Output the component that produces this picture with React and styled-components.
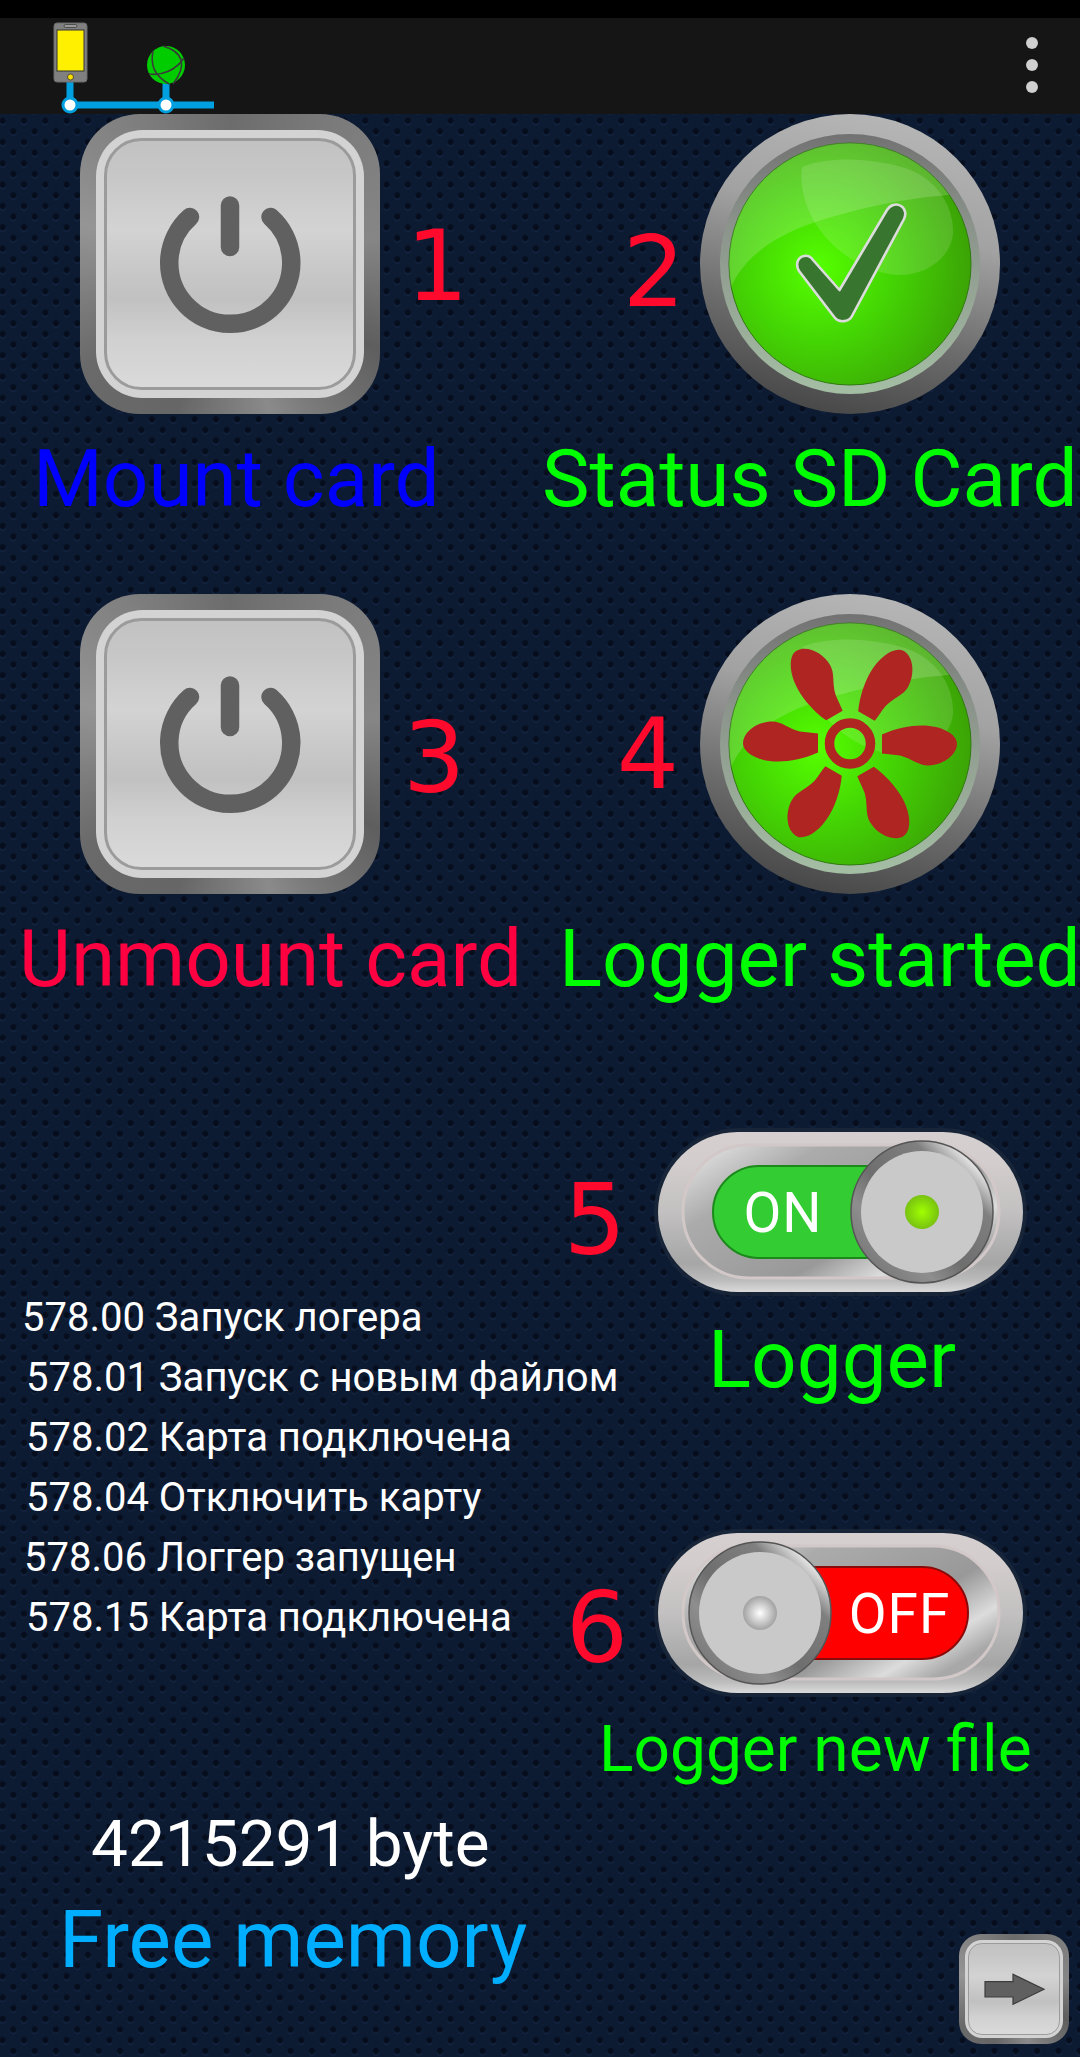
import React from "react";
import styled, { createGlobalStyle } from "styled-components";

const Global = createGlobalStyle`
  html, body { margin: 0; padding: 0; background: #0c1a32; }
  * { box-sizing: border-box; }
`;

const Page = styled.div`
  width: 1080px;
  height: 2057px;
  overflow: hidden;
  font-family: Roboto, "Liberation Sans", sans-serif;
  background-color: #0c1a32;
  background-image:
    radial-gradient(circle at center, #060e1d 0 2.6px, transparent 3.6px),
    radial-gradient(circle at center, #060e1d 0 2.6px, transparent 3.6px),
    radial-gradient(circle at center, #13233f 0 3px, transparent 4px),
    radial-gradient(circle at center, #13233f 0 3px, transparent 4px);
  background-size: 21.33px 21.33px;
  background-position: 2.67px -7.27px, 13.33px 3.4px, 2.67px -5.77px, 13.33px 4.9px;
`;

const StatusBar = styled.div`
  height: 18px;
  background: #000;
`;

const Header = styled.header`
  height: 96px;
  background: #151515;
  display: flex;
  justify-content: space-between;
  align-items: flex-start;
`;

const MenuDots = styled.div`
  margin: 19px 42px 0 0;
  display: flex;
  flex-direction: column;
  gap: 10px;
`;

const Dot = styled.span`
  width: 12px;
  height: 12px;
  border-radius: 50%;
  background: radial-gradient(circle, #d0d0d0 0 60%, #8a8a8a 100%);
`;

const Tiles = styled.section`
  display: grid;
  grid-template-columns: 540px 540px;
  grid-auto-rows: 480px;
`;

const Tile = styled.div`
  display: flex;
  flex-direction: column;
  min-width: 0;
`;

const ArtLine = styled.div`
  height: 300px;
  display: flex;
  align-items: center;
  justify-content: ${(p) => (p.$end ? "flex-end" : "flex-start")};
  padding: ${(p) => (p.$end ? "0 80px 0 0" : "0 0 0 80px")};
  gap: ${(p) => p.$gap}px;
`;

const Num = styled.span`
  font-family: "DejaVu Sans", "Noto Sans", sans-serif;
  font-size: 98px;
  line-height: 1;
  color: #ff0a2d;
  margin-top: ${(p) => p.$drop || 0}px;
`;

const Label = styled.div`
  font-size: ${(p) => p.$size || 80}px;
  line-height: 1;
  white-space: nowrap;
  color: ${(p) => p.$color};
  margin-top: ${(p) => p.$top || 0}px;
  margin-left: ${(p) => p.$left || 0}px;
`;

const Key = styled.div`
  flex: none;
  width: ${(p) => p.$size}px;
  height: ${(p) => p.$size}px;
  padding: ${(p) => p.$size * 0.053}px;
  border-radius: ${(p) => p.$size * 0.2}px;
  background: conic-gradient(#6c6c6c 0deg, #7c7c7c 40deg, #868686 80deg, #5e5e5e 120deg, #7a7a7a 150deg, #8a8a8a 165deg, #666 200deg, #6a6a6a 235deg, #959595 285deg, #7c7c7c 330deg, #6c6c6c 360deg);
`;

const KeyLip = styled.div`
  height: 100%;
  padding: ${(p) => p.$size * 0.028}px;
  border-radius: ${(p) => p.$size * 0.155}px;
  background: #d3d3d3;
`;

const KeyFace = styled.div`
  height: 100%;
  display: flex;
  align-items: center;
  justify-content: center;
  border: ${(p) => Math.max(1.5, p.$size * 0.011)}px solid #9b9b9b;
  border-radius: ${(p) => p.$size * 0.125}px;
  background: linear-gradient(180deg, #c2c2c2 0%, #c6c6c6 12%, #d3d3d3 36%, #c8c8c8 52%, #c1c1c1 64%, #d0d0d0 80%, #dadada 100%);
`;

const Lower = styled.section`
  display: grid;
  grid-template-columns: 540px 540px;
  margin-top: 58px;
`;

const LeftCol = styled.div`
  padding-top: 156px;
  min-width: 0;
`;

const LogList = styled.ul`
  list-style: none;
  margin: 0;
  padding: 0;
`;

const LogLine = styled.li`
  height: 60px;
  line-height: 60px;
  font-size: 40px;
  white-space: nowrap;
  color: #fff;
  padding-left: ${(p) => p.$indent}px;
`;

const Bytes = styled.div`
  font-size: 65.7px;
  line-height: 80px;
  color: #fff;
  margin: 156px 0 0 91px;
  white-space: nowrap;
`;

const FreeMem = styled.div`
  font-size: 80px;
  line-height: 100px;
  color: #00aeff;
  margin: 6px 0 0 59px;
  white-space: nowrap;
`;

const RightCol = styled.div`
  display: flex;
  flex-direction: column;
  min-width: 0;
`;

const SwitchLine = styled.div`
  height: 160px;
  display: flex;
  align-items: center;
  justify-content: flex-end;
  padding-right: 57px;
  gap: ${(p) => p.$gap}px;
  margin-top: ${(p) => p.$top || 0}px;
`;

const ArrowSlot = styled.div`
  display: flex;
  justify-content: flex-end;
  padding-right: 11px;
  margin-top: ${(p) => p.$top}px;
`;

const Art = styled.svg`
  display: block;
  flex: none;
`;

function StatusIcons() {
  return (
    <Art width="240" height="96" viewBox="0 18 240 96">
      <path d="M70 80V105M70 105H214M166 80V105" stroke="#00a0e0" strokeWidth="7" fill="none" />
      <rect x="54" y="23" width="33" height="59" rx="3" fill="#808080" stroke="#6a6a6a" />
      <rect x="57" y="30" width="27" height="41" fill="#fff000" stroke="#333" />
      <rect x="64" y="24.5" width="13" height="3" rx="1.5" fill="#999" stroke="#333" strokeWidth=".7" />
      <circle cx="70.5" cy="77" r="3" fill="#ffe000" stroke="#333" strokeWidth=".8" />
      <circle cx="166" cy="65" r="19" fill="#00cc00" />
      <g fill="none" stroke="#3a3a3a" strokeWidth="1.6">
        <path d="M163 46C184 52 187 66 173 84" />
        <path d="M153 51C150 66 155 76 169 84" />
        <path d="M149 74C162 76 176 70 184 58" />
      </g>
      <circle cx="70" cy="105" r="7" fill="#fff" stroke="#00a0e0" strokeWidth="3" />
      <circle cx="166" cy="105" r="7" fill="#fff" stroke="#00a0e0" strokeWidth="3" />
    </Art>
  );
}

function PowerKey() {
  return (
    <Key $size={300}>
      <KeyLip $size={300}>
        <KeyFace $size={300}>
          <Art width="200" height="200" viewBox="50 51 200 200">
            <path d="M110 104A61 61 0 1 0 190.5 104" fill="none" stroke="#606060" strokeWidth="18.5" strokeLinecap="round" />
            <path d="M150 92.5V134" fill="none" stroke="#606060" strokeWidth="18.5" strokeLinecap="round" />
          </Art>
        </KeyFace>
      </KeyLip>
    </Key>
  );
}

function ArrowKey() {
  return (
    <Key $size={110}>
      <KeyLip $size={110}>
        <KeyFace $size={110}>
          <Art width="74" height="40" viewBox="18 35 74 40">
            <path d="M26 47.7H54V40.3L85 55.3L54 70.3V63H26Z" fill="#606060" stroke="#3c3c3c" strokeWidth="1.2" />
          </Art>
        </KeyFace>
      </KeyLip>
    </Key>
  );
}

function RoundGlass({ id, children }) {
  return (
    <Art width="300" height="300" viewBox="0 0 300 300">
      <defs>
        <linearGradient id={`${id}-rim`} x1="0.62" y1="0" x2="0.38" y2="1">
          <stop offset="0" stopColor="#b6b6b6" />
          <stop offset="0.35" stopColor="#a2a2a2" />
          <stop offset="0.7" stopColor="#6c6c6c" />
          <stop offset="1" stopColor="#474747" />
        </linearGradient>
        <linearGradient id={`${id}-bezel`} x1="0" y1="0" x2="0" y2="1">
          <stop offset="0" stopColor="#727272" />
          <stop offset="0.35" stopColor="#8b938b" />
          <stop offset="1" stopColor="#a4bea4" />
        </linearGradient>
        <radialGradient id={`${id}-face`} cx="0.37" cy="0.52" r="0.68">
          <stop offset="0" stopColor="#55ff00" />
          <stop offset="0.45" stopColor="#44d404" />
          <stop offset="1" stopColor="#3a9c06" />
        </radialGradient>
        <clipPath id={`${id}-clip`}>
          <circle cx="150" cy="150" r="121" />
        </clipPath>
      </defs>
      <circle cx="150" cy="150" r="150" fill={`url(#${id}-rim)`} />
      <circle cx="150" cy="150" r="130" fill={`url(#${id}-bezel)`} />
      <circle cx="150" cy="150" r="121" fill={`url(#${id}-face)`} stroke="#2f7a10" strokeWidth="1" />
      <g clipPath={`url(#${id}-clip)`}>
        <path d="M20 20H290V79C220 80 165 92 113 109C75 122 45 142 31 173L20 200Z" fill="#fff" opacity=".17" />
        <path d="M102 53C130 42 170 44 205 54C235 64 254 90 253 120C250 145 225 162 197 161C160 158 122 130 108 95C103 82 100 66 102 53Z" fill="#fff" opacity=".13" />
      </g>
      {children}
    </Art>
  );
}

function Check() {
  return (
    <path
      d="M99 157C95 150 98 143 104 142C108 141 111 143 113 146L139.5 176L187 96C190 91 196 89 201 92C206 95 206 101 204 105L152 202C149 208 139 209 135 204Z"
      fill="#38752f"
      stroke="#dcdcdc"
      strokeWidth="2.6"
      strokeLinejoin="round"
    />
  );
}

function Fan() {
  const blade = "M32 -9C45 -15 60 -18 72 -18C92 -18 107 -9 107 0C107 12 92 22 78 22C68 22 62 15 50 12C44 11 38 11 32 10Z";
  return (
    <g transform="translate(150 149.5)" fill="#ae2522">
      {[0, 60, 120, 180, 240, 300].map((a) => (
        <path key={a} d={blade} transform={`rotate(${a})`} />
      ))}
      <circle r="20.5" fill="none" stroke="#ae2522" strokeWidth="9.5" />
    </g>
  );
}

function Toggle({ id, on }) {
  const knobX = on ? 264 : 102;
  return (
    <Art width="365" height="160" viewBox="0 0 365 160" style={{ overflow: "visible" }}>
      <defs>
        <linearGradient id={`${id}-body`} x1="0" y1="0" x2="0" y2="1">
          <stop offset="0" stopColor="#d6cfcf" />
          <stop offset="0.2" stopColor="#d3cdcd" />
          <stop offset="0.5" stopColor="#c2c0c0" />
          <stop offset="0.82" stopColor="#a6a6a6" />
          <stop offset="0.93" stopColor="#bcbcbc" />
          <stop offset="1" stopColor="#dadada" />
        </linearGradient>
        <linearGradient id={`${id}-well`} x1="0" y1="0" x2="1" y2="0.7">
          <stop offset="0" stopColor="#9e9e9e" />
          <stop offset="0.1" stopColor="#d6d6d6" />
          <stop offset="0.3" stopColor="#ababab" />
          <stop offset="0.7" stopColor="#999" />
          <stop offset="0.88" stopColor="#dcdcdc" />
          <stop offset="1" stopColor="#a8a8a8" />
        </linearGradient>
        <linearGradient id={`${id}-ring`} x1="0" y1="1" x2="1" y2="0">
          <stop offset="0" stopColor="#6a6a6a" />
          <stop offset="0.3" stopColor="#8e8e8e" />
          <stop offset="0.45" stopColor="#6e6e6e" />
          <stop offset="0.72" stopColor="#7f7f7f" />
          <stop offset="0.85" stopColor="#e4e4e4" />
          <stop offset="1" stopColor="#777" />
        </linearGradient>
        <radialGradient id={`${id}-led`}>
          <stop offset="0" stopColor={on ? "#a0ff00" : "#ffffff"} />
          <stop offset="1" stopColor={on ? "#78c212" : "#a2a2a2"} />
        </radialGradient>
      </defs>
      <rect x="-4" y="-4" width="373" height="168" rx="84" fill="#1c2a3c" opacity=".75" />
      <rect x="0" y="0" width="365" height="160" rx="80" fill={`url(#${id}-body)`} />
      <rect x="25" y="13" width="316" height="133" rx="66" fill={`url(#${id}-well)`} stroke="#d2c8c8" strokeWidth="3" />
      {on ? (
        <rect x="55" y="34" width="210" height="92" rx="46" fill="#33cc33" stroke="#1b8a1b" strokeWidth="2" />
      ) : (
        <rect x="100" y="34" width="210" height="92" rx="46" fill="#ff0000" stroke="#8a0a0a" strokeWidth="2" />
      )}
      <text
        x={on ? 125 : 241.5}
        y="100"
        textAnchor="middle"
        fill="#fff"
        fontFamily="Roboto, sans-serif"
        fontWeight="400"
        fontSize="55"
        letterSpacing="1"
      >
        {on ? "ON" : "OFF"}
      </text>
      <circle cx={knobX} cy="80" r="71" fill={`url(#${id}-ring)`} />
      <circle cx={knobX} cy="80" r="71" fill="none" stroke="#555" strokeWidth="1.5" />
      <circle cx={knobX} cy="80" r="61" fill="#c9c9c9" />
      <circle cx={knobX} cy="80" r="17" fill={`url(#${id}-led)`} />
    </Art>
  );
}

const logs = [
  { t: "578.00 Запуск логера", i: 22 },
  { t: "578.01 Запуск с новым файлом", i: 26 },
  { t: "578.02 Карта подключена", i: 26 },
  { t: "578.04 Отключить карту", i: 26 },
  { t: "578.06 Логгер запущен", i: 24 },
  { t: "578.15 Карта подключена", i: 26 },
];

export default function App() {
  return (
    <Page>
      <Global />
      <StatusBar />
      <Header>
        <StatusIcons />
        <MenuDots>
          <Dot />
          <Dot />
          <Dot />
        </MenuDots>
      </Header>
      <Tiles>
        <Tile>
          <ArtLine $gap={26}>
            <PowerKey />
            <Num $drop={4}>1</Num>
          </ArtLine>
          <Label $color="#0000ff" $left={33} $top={25}>Mount card</Label>
        </Tile>
        <Tile>
          <ArtLine $end $gap={15}>
            <Num $drop={15}>2</Num>
            <RoundGlass id="status">
              <Check />
            </RoundGlass>
          </ArtLine>
          <Label $color="#00ff00" $left={2} $top={25}>Status SD Card</Label>
        </Tile>
        <Tile>
          <ArtLine $gap={23}>
            <PowerKey />
            <Num $drop={27}>3</Num>
          </ArtLine>
          <Label $color="#ff0040" $left={19} $top={25}>Unmount card</Label>
        </Tile>
        <Tile>
          <ArtLine $end $gap={21}>
            <Num $drop={19}>4</Num>
            <RoundGlass id="logger">
              <Fan />
            </RoundGlass>
          </ArtLine>
          <Label $color="#00ff00" $left={19} $top={25}>Logger started</Label>
        </Tile>
      </Tiles>
      <Lower>
        <LeftCol>
          <LogList>
            {logs.map((l) => (
              <LogLine key={l.t} $indent={l.i}>{l.t}</LogLine>
            ))}
          </LogList>
          <Bytes>4215291 byte</Bytes>
          <FreeMem>Free memory</FreeMem>
        </LeftCol>
        <RightCol>
          <SwitchLine $gap={32}>
            <Num $drop={15}>5</Num>
            <Toggle id="sw1" on />
          </SwitchLine>
          <Label $color="#00ff00" $left={168} $top={28}>Logger</Label>
          <SwitchLine $gap={30} $top={133}>
            <Num $drop={29}>6</Num>
            <Toggle id="sw2" />
          </SwitchLine>
          <Label $color="#00ff00" $size={64} $left={59} $top={25}>Logger new file</Label>
          <ArrowSlot $top={152}>
            <ArrowKey />
          </ArrowSlot>
        </RightCol>
      </Lower>
    </Page>
  );
}
